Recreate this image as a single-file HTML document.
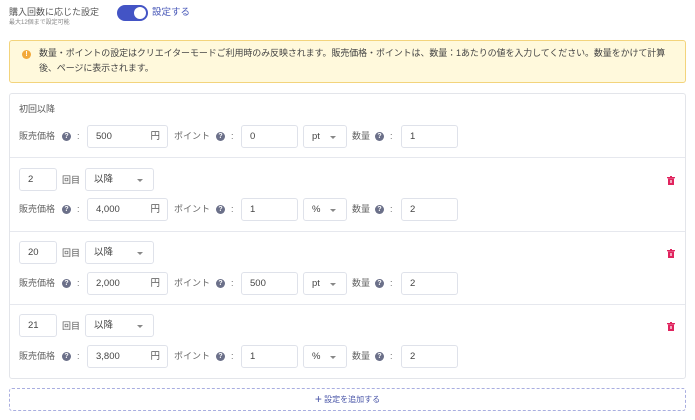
<!DOCTYPE html>
<html><head><meta charset="utf-8"><style>
*{box-sizing:border-box;margin:0;padding:0}
body{width:695px;height:420px;background:#fff;font-family:"Liberation Sans","Noto Sans CJK JP",sans-serif;color:#555;font-size:9px;position:relative;overflow:hidden}
.a{position:absolute;line-height:1.2}
.inp{position:absolute;height:23px;border:1px solid #dfe2ea;border-radius:3px;background:#fff;font-size:9.5px;line-height:21px;padding-left:8px;color:#444}
.inp span{position:absolute;right:7px;top:0;line-height:21px;color:#555}
.q{position:absolute;width:9px;height:9px;border-radius:50%;background:#6b7089;color:#fff;font-size:7px;line-height:9px;text-align:center;font-weight:bold}
.lbl{position:absolute;font-size:9px;color:#666;line-height:11px}
.caret{position:absolute;right:10px;top:10px;border-left:3px solid transparent;border-right:3px solid transparent;border-top:3px solid #888}
.sec{position:absolute;left:10px;width:675px;border-top:1px solid #e6e8ee}
.trash{position:absolute;left:667px;width:8px;height:9px}
</style></head><body>
<div class="a" style="left:9px;top:7px;font-size:9px;color:#555">購入回数に応じた設定</div>
<div class="a" style="left:9px;top:20px;font-size:6px;color:#888">最大12個まで設定可能</div>
<div class="a" style="left:117px;top:5px;width:31px;height:16px;border-radius:8px;background:#4354c5"></div>
<div class="a" style="left:134px;top:7px;width:12px;height:12px;border-radius:50%;background:#fff"></div>
<div class="a" style="left:152px;top:7px;font-size:9.5px;color:#4858b8">設定する</div>

<div class="a" style="left:9px;top:40px;width:677px;height:43px;background:#fff9dc;border:1px solid #f3d47c;border-radius:3px"></div>
<div class="a" style="left:22px;top:50px;width:9px;height:9px;border-radius:50%;background:#f2a93b;color:#fff;font-size:7px;line-height:9px;text-align:center;font-weight:bold">!</div>
<div class="a" style="left:39px;top:46px;width:640px;font-size:9px;line-height:15px;color:#444;letter-spacing:-0.1px">数量・ポイントの設定はクリエイターモードご利用時のみ反映されます。販売価格・ポイントは、数量：1あたりの値を入力してください。数量をかけて計算後、ページに表示されます。</div>

<div class="a" style="left:9px;top:93px;width:677px;height:286px;border:1px solid #e3e5ea;border-radius:3px"></div>
<div class="sec" style="top:157px"></div>
<div class="sec" style="top:231px"></div>
<div class="sec" style="top:304px"></div>

<div class="a" style="left:19px;top:104px;font-size:9px;color:#555">初回以降</div>

<div id="rows"></div>
<script>
var rows=[
 {y:125,top:null,price:"500",pt:"0",unit:"pt",n:"1"},
 {y:198,top:{y:168,n:"2"},price:"4,000",pt:"1",unit:"%",n:"2"},
 {y:272,top:{y:241,n:"20"},price:"2,000",pt:"500",unit:"pt",n:"2"},
 {y:345,top:{y:314,n:"21"},price:"3,800",pt:"1",unit:"%",n:"2"}];
var h="";
rows.forEach(function(r){
 if(r.top){var t=r.top.y;
  h+='<div class="inp" style="left:19px;top:'+t+'px;width:38px">'+r.top.n+'</div>';
  h+='<div class="lbl" style="left:62px;top:'+(t+7)+'px;color:#555">回目</div>';
  h+='<div class="inp" style="left:85px;top:'+t+'px;width:69px">以降<div class="caret"></div></div>';
  h+='<svg class="trash" style="top:'+(t+8)+'px" viewBox="0 0 8 9"><rect x="0" y="1" width="8" height="1.3" fill="#e0245e"/><rect x="3" y="0" width="2" height="1.2" fill="#e0245e"/><rect x="1" y="2.5" width="6" height="6.5" fill="#e0245e"/><rect x="3" y="4" width="2" height="3" fill="#fff" opacity=".6"/></svg>';
 }
 var y=r.y;
 h+='<div class="lbl" style="left:19px;top:'+(y+6)+'px">販売価格</div>';
 h+='<div class="q" style="left:62px;top:'+(y+7)+'px">?</div><div class="lbl" style="left:77px;top:'+(y+6)+'px">:</div>';
 h+='<div class="inp" style="left:87px;top:'+y+'px;width:81px">'+r.price+'<span>円</span></div>';
 h+='<div class="lbl" style="left:174px;top:'+(y+6)+'px">ポイント</div>';
 h+='<div class="q" style="left:216px;top:'+(y+7)+'px">?</div><div class="lbl" style="left:231px;top:'+(y+6)+'px">:</div>';
 h+='<div class="inp" style="left:241px;top:'+y+'px;width:57px">'+r.pt+'</div>';
 h+='<div class="inp" style="left:303px;top:'+y+'px;width:44px">'+r.unit+'<div class="caret"></div></div>';
 h+='<div class="lbl" style="left:352px;top:'+(y+6)+'px">数量</div>';
 h+='<div class="q" style="left:375px;top:'+(y+7)+'px">?</div><div class="lbl" style="left:390px;top:'+(y+6)+'px">:</div>';
 h+='<div class="inp" style="left:401px;top:'+y+'px;width:57px">'+r.n+'</div>';
});
document.getElementById("rows").innerHTML=h;
</script>

<div class="a" style="left:9px;top:388px;width:677px;height:23px;border:1px dashed #a9aee0;border-radius:3px;text-align:center;line-height:21px;font-size:8px;color:#4a56a8"><span style="font-size:12px;vertical-align:-1px">+</span> 設定を追加する</div>
</body></html>
